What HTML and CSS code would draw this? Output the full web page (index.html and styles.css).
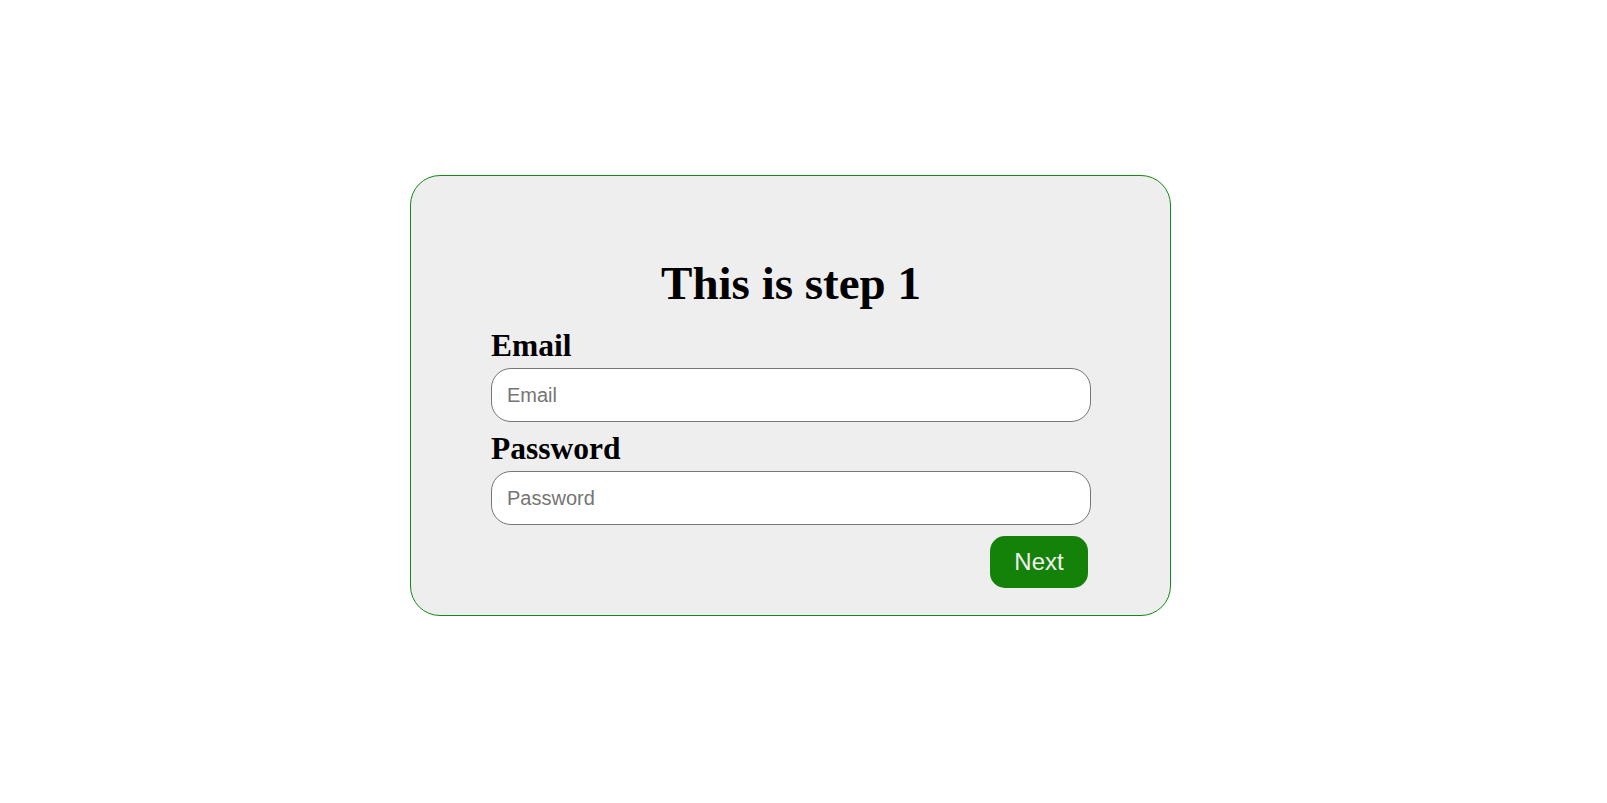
FILE: index.html
```html
<!DOCTYPE html>
<html lang="en">
<head>
<meta charset="utf-8">
<title>Step 1</title>
<link rel="stylesheet" href="styles.css">
</head>
<body>
<main class="page">
  <form class="card">
    <h1 class="title">This is step 1</h1>
    <label class="label" for="email">Email</label>
    <input class="field" id="email" type="email" placeholder="Email">
    <label class="label" for="password">Password</label>
    <input class="field field-last" id="password" type="password" placeholder="Password">
    <div class="actions">
      <button class="next" type="button">Next</button>
    </div>
  </form>
</main>
</body>
</html>
```

FILE: styles.css
```css
html, body {
  margin: 0;
  padding: 0;
  background: #ffffff;
}

.page {
  box-sizing: border-box;
  height: 803px;
  padding: 0 26px 12px 0;
  display: flex;
  align-items: center;
  justify-content: center;
  font-family: "Liberation Serif", "Times New Roman", serif;
}

.card {
  box-sizing: border-box;
  width: 761px;
  height: 441px;
  padding: 81px 79px 0 80px;
  background: #eeeeee;
  border: 1px solid #138a13;
  border-radius: 30px;
  display: flex;
  flex-direction: column;
}

.title {
  margin: 0 0 18px 0;
  font-size: 47px;
  line-height: 53px;
  font-weight: bold;
  text-align: center;
  color: #000;
}

.label {
  display: block;
  font-size: 31.5px;
  line-height: 35px;
  font-weight: bold;
  color: #000;
  margin: 0 0 5px 0;
}

.field {
  box-sizing: border-box;
  width: 600px;
  height: 54px;
  margin: 0 0 9px 0;
  padding: 0 15px;
  border: 1px solid #767676;
  border-radius: 20px;
  background: #ffffff;
  font-family: "Liberation Sans", Arial, sans-serif;
  font-size: 20px;
  color: #000;
  outline: none;
}

.field::placeholder {
  color: #757575;
}

.field-last {
  margin-bottom: 11px;
}

.actions {
  display: flex;
  justify-content: flex-end;
  width: 597px;
}

.next {
  box-sizing: border-box;
  width: 98px;
  height: 52px;
  padding: 0;
  border: none;
  border-radius: 15px;
  background: #148109;
  color: #f0f0f0;
  font-family: "Liberation Sans", Arial, sans-serif;
  font-size: 24px;
  cursor: pointer;
}
```
